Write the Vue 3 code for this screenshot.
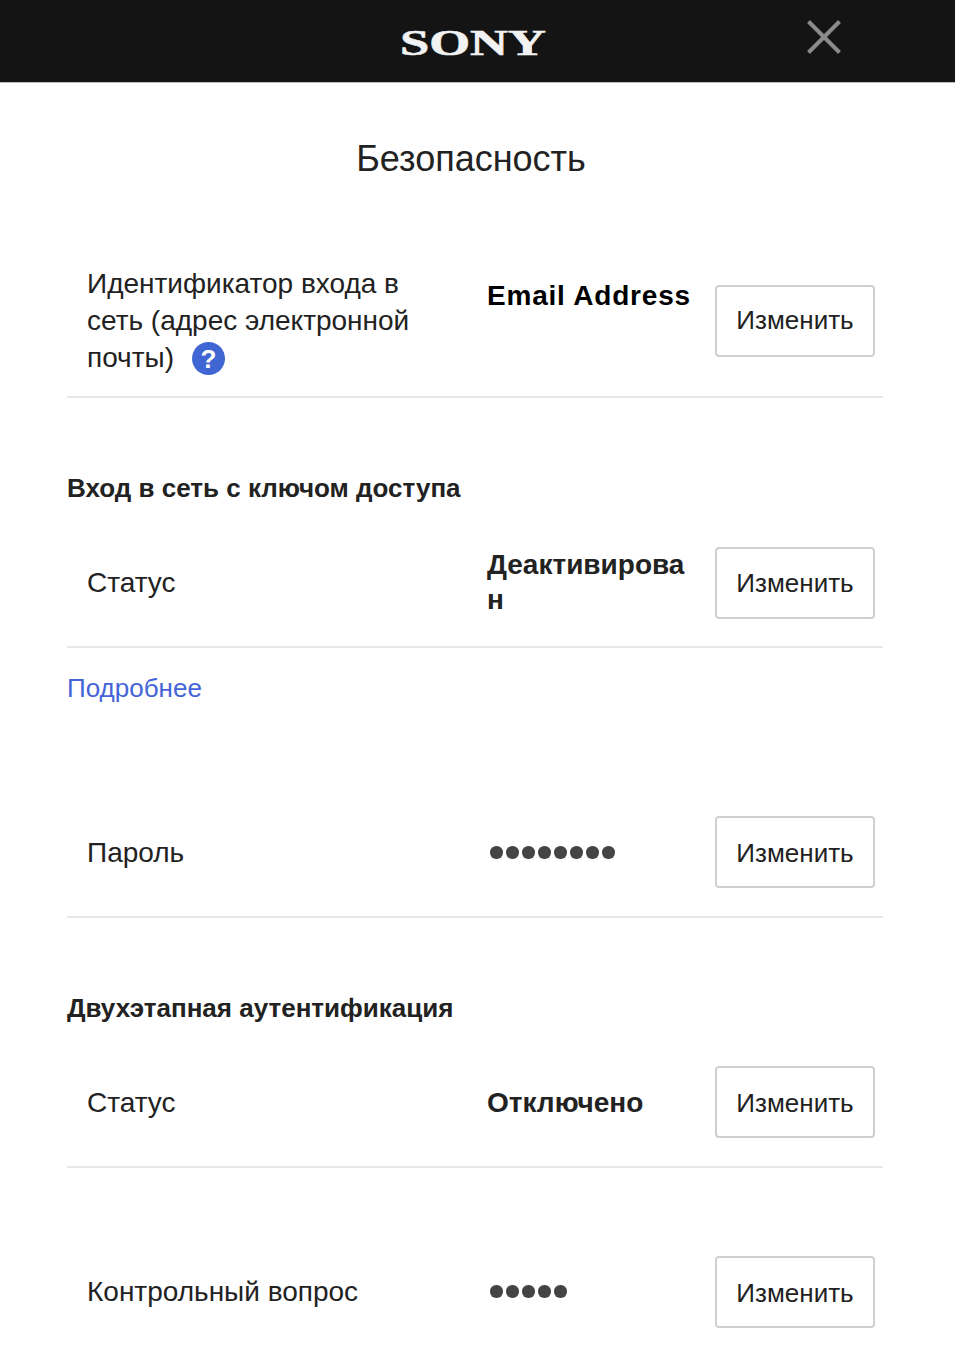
<script setup>
const rows = {
  login: { label: 'Идентификатор входа в сеть (адрес электронной почты)', value: 'Email Address' },
}
</script>

<template>
  <div class="page">
    <header class="top">
      <svg class="logo" width="146" height="30" viewBox="0 0 146 30" role="img" aria-label="SONY">
        <text x="0" y="27" textLength="146" lengthAdjust="spacingAndGlyphs" class="logo-text">SONY</text>
      </svg>
      <button class="close" aria-label="Закрыть">
        <svg width="34" height="34" viewBox="0 0 34 34">
          <path d="M1.5 1.5 L32.5 32.5 M32.5 1.5 L1.5 32.5" stroke="#8a8a8a" stroke-width="4" fill="none" />
        </svg>
      </button>
    </header>

    <main class="content">
      <h1 class="title">Безопасность</h1>

      <section class="row row-first">
        <div class="label">
          {{ rows.login.label }}
          <svg class="help" width="33" height="33" viewBox="0 0 33 33">
            <circle cx="16.5" cy="16.5" r="16.5" fill="#3f66d2" />
            <text x="16.5" y="25.5" text-anchor="middle" class="help-mark">?</text>
          </svg>
        </div>
        <div class="value value-top">{{ rows.login.value }}</div>
        <button class="edit">Изменить</button>
      </section>

      <h2 class="heading heading-a">Вход в сеть с ключом доступа</h2>
      <section class="row row-b row-passkey">
        <div class="label">Статус</div>
        <div class="value">Деактивирован</div>
        <button class="edit">Изменить</button>
      </section>
      <a class="more" href="#">Подробнее</a>

      <section class="row row-c low">
        <div class="label">Пароль</div>
        <div class="value dots">
          <i v-for="n in 8" :key="n"></i>
        </div>
        <button class="edit">Изменить</button>
      </section>

      <h2 class="heading heading-d">Двухэтапная аутентификация</h2>
      <section class="row row-b low">
        <div class="label">Статус</div>
        <div class="value">Отключено</div>
        <button class="edit">Изменить</button>
      </section>

      <section class="row row-e low">
        <div class="label">Контрольный вопрос</div>
        <div class="value dots">
          <i v-for="n in 5" :key="n"></i>
        </div>
        <button class="edit">Изменить</button>
      </section>
    </main>
  </div>
</template>

<style>
html, body { background: #fff; }
</style>

<style scoped>
.page {
  width: 955px;
  height: 1345px;
  overflow: hidden;
  background: #fff;
  color: #222;
  font-family: "Liberation Sans", Arial, sans-serif;
}
.top {
  height: 83px;
  background: #141414;
  border-bottom: 1px solid #bdbdbd;
  position: relative;
  display: flex;
  justify-content: center;
  align-items: center;
  padding-right: 9px;
  box-sizing: border-box;
}
.logo { display: block; margin-top: 3px; overflow: visible; }
.logo-text {
  font-family: "Liberation Serif", serif;
  font-weight: 700;
  font-size: 35px;
  fill: #f2f2f2;
  stroke: #f2f2f2;
  stroke-width: 0.6px;
}
.close {
  position: absolute;
  left: 807px;
  top: 20px;
  width: 34px;
  height: 34px;
  padding: 0;
  border: 0;
  background: none;
  line-height: 0;
}
.content {
  padding: 0 72px 0 67px;
}
.title {
  margin: 54px 0 0;
  padding-right: 8px;
  font-size: 36px;
  line-height: 44px;
  font-weight: 400;
  text-align: center;
}
.row {
  display: grid;
  grid-template-columns: 420px 228px 160px;
  align-items: center;
  width: 816px;
  box-sizing: border-box;
  padding-bottom: 18px;
  border-bottom: 2px solid #e8e8e8;
}
.row-first { margin-top: 84px; padding-bottom: 19.5px; }
.row-first .edit { margin: 10.5px 0 9px; padding-bottom: 2px; }
.label {
  padding-left: 20px;
  max-width: 350px;
  font-size: 28px;
  line-height: 37px;
}
.help {
  vertical-align: -8px;
  margin-left: 10px;
}
.help-mark {
  font-family: "Liberation Sans", sans-serif;
  font-weight: 700;
  font-size: 26px;
  fill: #fff;
}
.value {
  font-size: 28px;
  line-height: 35px;
  font-weight: 700;
  word-break: break-all;
  padding-right: 24px;
}
.value-top {
  align-self: start;
  padding-top: 13px;
  padding-right: 0;
  letter-spacing: 0.8px;
  color: #000;
}
.edit {
  width: 160px;
  height: 72px;
  margin: 10px 0;
  padding: 0;
  border: 2px solid #cfcfcf;
  border-radius: 4px;
  background: #fff;
  color: #222;
  font-family: inherit;
  font-size: 26px;
}
.heading {
  margin: 0;
  font-size: 26px;
  line-height: 32px;
  font-weight: 700;
}
.heading-a { margin-top: 74px; }
.heading-d { margin-top: 74px; }
.row-b { margin-top: 32px; }
.row-passkey { margin-top: 33px; padding-bottom: 17px; }
.row-passkey .value { margin-bottom: 2px; }
.row-passkey .edit { padding-top: 2px; }
.low .label { margin-top: 2px; }
.low .value { margin-top: 2px; }
.low .edit { padding-top: 4px; }
.row-e .label { margin-top: 0; }
.row-e .value { margin-top: 0; }
.more {
  display: block;
  margin-top: 24px;
  font-size: 26px;
  line-height: 32px;
  color: #4464d8;
  text-decoration: none;
}
.row-c { margin-top: 102px; }
.row-e { margin-top: 78px; }
.dots {
  display: flex;
  gap: 3.5px;
  padding-left: 3px;
}
.dots i {
  display: block;
  width: 12.5px;
  height: 12.5px;
  border-radius: 50%;
  background: #444;
}
</style>
